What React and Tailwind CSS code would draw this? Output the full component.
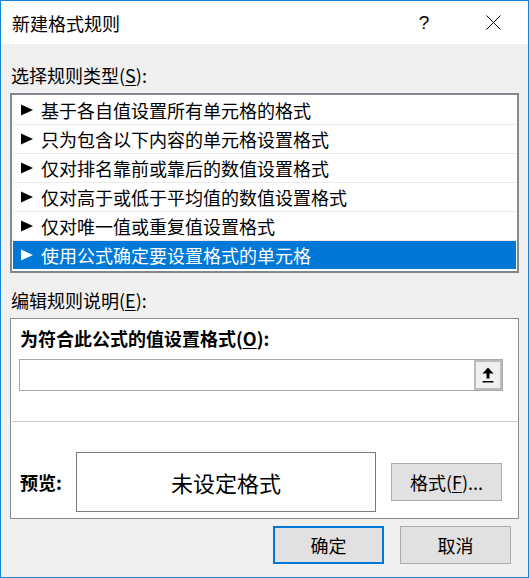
import React from "react";

const rules = [
  "基于各自值设置所有单元格的格式",
  "只为包含以下内容的单元格设置格式",
  "仅对排名靠前或靠后的数值设置格式",
  "仅对高于或低于平均值的数值设置格式",
  "仅对唯一值或重复值设置格式",
  "使用公式确定要设置格式的单元格",
];

const Arrow = ({ color }) => (
  <svg width="12" height="12" viewBox="0 0 12 12" className="shrink-0">
    <polygon points="0,0.5 12,6 0,11.5" fill={color} />
  </svg>
);

const RuleRow = ({ label, selected }) => (
  <div
    className={`h-[29px] border-b flex items-center gap-[8px] pl-[8px] ${
      selected ? "bg-[#0078d7] border-white text-white" : "border-[#ebebeb] text-black"
    }`}
  >
    <Arrow color={selected ? "#ffffff" : "#000000"} />
    <span className="leading-[28px]">{label}</span>
  </div>
);

export default function App() {
  const selectedIndex = 5;

  return (
    <div className="w-[529px] h-[578px] border border-[#1883d7] bg-[#f0f0f0] flex flex-col font-['Noto_Sans_CJK_SC',sans-serif] text-[18px] text-black overflow-hidden">
      {/* title bar */}
      <div className="h-[43px] bg-white flex items-center pl-[11px] shrink-0">
        <span className="leading-[24px]">新建格式规则</span>
        <span className="ml-auto w-[20px] text-center leading-[24px] font-['Liberation_Sans',sans-serif] text-[19px] font-light">?</span>
        <svg width="15" height="15" viewBox="0 0 15 15" className="ml-[52px] mr-[27px]">
          <path d="M0.5 0.5L14.5 14.5M14.5 0.5L0.5 14.5" stroke="#000" strokeWidth="1" />
        </svg>
      </div>

      <div className="flex flex-col px-[9px]">
        <div className="mt-[19px] h-[24px] leading-[24px] pl-px">
          选择规则类型(<span className="underline underline-offset-2">S</span>):
        </div>

        <div className="mt-[6px] h-[180px] border-2 border-[#828790] bg-white p-px">
          {rules.map((r, i) => (
            <RuleRow key={i} label={r} selected={i === selectedIndex} />
          ))}
        </div>

        <div className="mt-[15px] h-[24px] leading-[24px] pl-px">
          编辑规则说明(<span className="underline underline-offset-2">E</span>):
        </div>

        <div className="mt-[6px] h-[201px] border border-[#8c8c8c] bg-white flex flex-col">
          <div className="h-[102px] flex flex-col">
            <div className="mt-[7px] pl-[9px] h-[24px] leading-[24px] font-bold">
              为符合此公式的值设置格式(<span className="underline underline-offset-2">O</span>):
            </div>
            <div className="mt-[9px] ml-[8px] w-[484px] h-[32px] border border-[#a9a9a9] flex">
              <div className="flex-1" />
              <div className="w-[28px] h-full border-2 border-[#bcbcbc] bg-[#f0f0f0] flex items-center justify-center">
                <svg width="12" height="17" viewBox="0 0 12 17">
                  <polygon points="6,0.5 11.5,6.5 0.5,6.5" fill="#000" />
                  <rect x="4.5" y="6" width="3" height="5.5" fill="#000" />
                  <rect x="0.5" y="14" width="11" height="1.5" fill="#000" />
                </svg>
              </div>
            </div>
          </div>

          <div className="h-px bg-[#c8c8c8] mx-px" />

          <div className="pt-[30px] flex items-center">
            <span className="pl-[9px] w-[65px] leading-[24px] font-bold">预览:</span>
            <div className="w-[300px] h-[60px] border border-[#7a7a7a] flex items-center justify-center text-[22px]">
              未设定格式
            </div>
            <button className="ml-[15px] w-[111px] h-[38px] border border-[#adadad] bg-[#e1e1e1] leading-[24px]">
              格式(<span className="underline underline-offset-2">F</span>)...
            </button>
          </div>
        </div>

        <div className="mt-[7px] flex justify-end gap-[16px] pr-[8px]">
          <button className="w-[111px] h-[38px] border-2 border-[#0078d7] bg-[#e1e1e1] leading-[24px]">
            确定
          </button>
          <button className="w-[111px] h-[38px] border border-[#adadad] bg-[#e1e1e1] leading-[24px]">
            取消
          </button>
        </div>
      </div>
    </div>
  );
}
